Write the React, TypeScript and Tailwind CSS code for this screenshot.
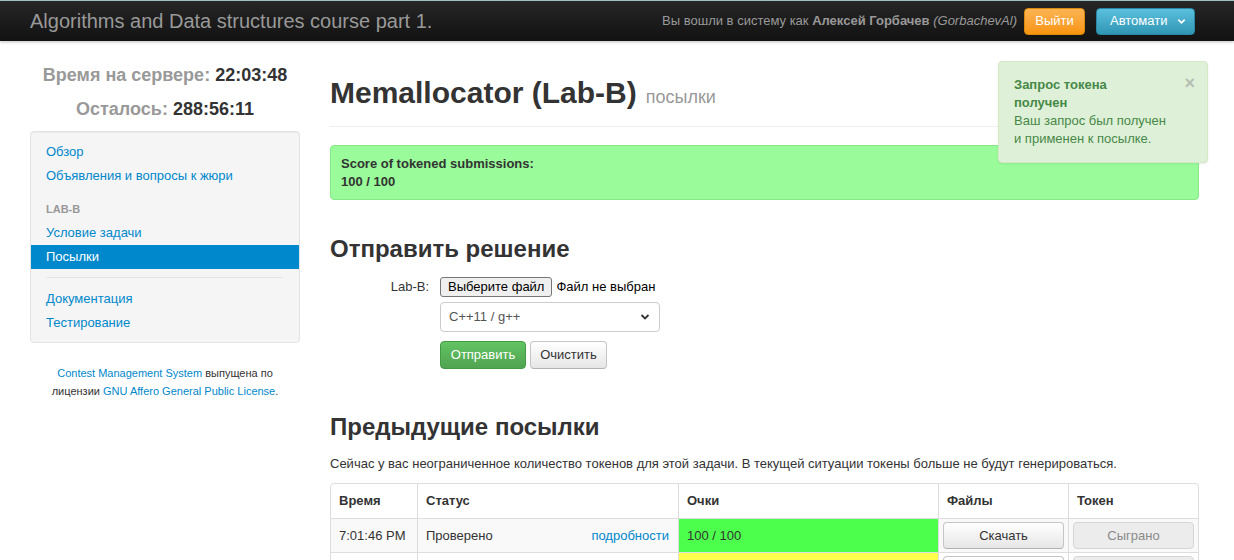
import React from 'react';

const rows = [
  { time: '7:01:46 PM', status: 'Проверено', score: '100 / 100', color: 'bg-[#4cff4c]', token: 'Сыграно', striped: true, files: 'Скачать', details: 'подробности' },
  // second row is cut by the bottom edge of the window; only its top is visible
  { time: '', status: '', score: '', color: 'bg-[#ffff4c]', token: '', striped: false, files: '', details: '' },
];

function Navbar() {
  return (
    <div className="h-[41px] border-t border-[#9fbfc1] bg-gradient-to-b from-[#262626] to-[#121212] flex items-center justify-between pl-[30px] pr-[39px] shadow-[0_1px_3px_rgba(0,0,0,0.25)]">
      <div className="text-[20px] text-[#999] leading-none">Algorithms and Data structures course part 1.</div>
      <div className="flex items-center">
        <span className="text-[13px] text-[#999]">
          Вы вошли в систему как <b>Алексей Горбачев</b> <i>(GorbachevAl)</i>
        </span>
        <button className="ml-[7px] h-[27px] w-[61px] rounded-[4px] border border-[#d88a0c] bg-gradient-to-b from-[#fbb450] to-[#f89406] text-[13px] text-white">
          Выйти
        </button>
        <button className="ml-[11px] h-[27px] w-[99px] rounded-[4px] border border-[#2a87a3] bg-gradient-to-b from-[#5bc0de] to-[#2f96b4] text-[13px] text-white flex items-center pl-[13px] pr-[8px]">
          <span className="flex-1 text-left">Автомати</span>
          <svg width="9" height="9" viewBox="0 0 10 10" className="shrink-0">
            <path d="M1.5 3 L5 6.5 L8.5 3" stroke="white" strokeWidth="2" fill="none" />
          </svg>
        </button>
      </div>
    </div>
  );
}

function Sidebar() {
  const item = 'block h-6 leading-6 px-[15px] text-[13px] text-[#0088cc]';
  return (
    <div className="ml-[30px] w-[270px] shrink-0 pt-[22px]">
      <div className="text-center text-[18px] font-bold leading-6 text-[#999]">
        Время на сервере: <span className="text-[#333]">22:03:48</span>
      </div>
      <div className="mt-[10px] text-center text-[18px] font-bold leading-6 text-[#999]">
        Осталось: <span className="text-[#333]">288:56:11</span>
      </div>
      <div className="mt-[10px] rounded-[4px] border border-[#e3e3e3] bg-[#f5f5f5] pt-[8px] pb-[7px] shadow-[inset_0_1px_1px_rgba(0,0,0,0.05)]">
        <a className={item}>Обзор</a>
        <a className={item}>Объявления и вопросы к жюри</a>
        <div className="mt-[9px] h-6 leading-6 px-[15px] text-[11px] font-bold uppercase text-[#999]">Lab-B</div>
        <a className={item}>Условие задачи</a>
        <a className="block h-6 leading-6 px-[15px] text-[13px] text-white bg-[#0088cc]">Посылки</a>
        <div className="mx-[16px] mt-[8px] mb-[9px] h-px bg-[#e5e5e5]" />
        <a className={item}>Документация</a>
        <a className={item}>Тестирование</a>
      </div>
      <div className="mt-[21px] text-center text-[11px] leading-[18px] text-[#333]">
        <span className="text-[#0088cc]">Contest Management System</span> выпущена по
        <br />
        лицензии <span className="text-[#0088cc]">GNU Affero General Public License</span>.
      </div>
    </div>
  );
}

function Main() {
  const btn = 'rounded-[4px] border border-[#c5c5c5] border-b-[#b3b3b3] bg-gradient-to-b from-white to-[#e6e6e6] text-[13px] text-[#333]';
  return (
    <div className="ml-[30px] w-[869px] shrink-0 pt-[32px] text-[13px] text-[#333]">
      <div className="flex items-baseline border-b border-[#eee] pb-[13px]">
        <h1 className="text-[30px] font-bold leading-[40px] text-[#333]">Memallocator (Lab-B)</h1>
        <span className="ml-[9px] text-[18px] text-[#999]">посылки</span>
      </div>

      <div className="mt-[18px] rounded-[4px] border border-[#87e887] bg-[#99fb99] pl-[10px] pt-[9px] pb-[8px] font-bold leading-[18px] text-[#333]">
        <div>Score of tokened submissions:</div>
        <div>100 / 100</div>
      </div>

      <h2 className="mt-[29px] text-[24px] font-bold leading-[40px]">Отправить решение</h2>

      <div className="mt-[8px] flex">
        <div className="w-[99px] text-right leading-[20px]">Lab-B:</div>
        <div className="ml-[11px]">
          <div className="flex items-center h-[20px]">
            <span className="h-[20px] rounded-[3px] border border-[#767676] bg-[#efefef] px-[7px] leading-[18px] text-[13px] text-black">
              Выберите файл
            </span>
            <span className="ml-[4px] text-black">Файл не выбран</span>
          </div>
          <div className="mt-[5px] flex h-[30px] w-[220px] items-center justify-between rounded-[4px] border border-[#ccc] bg-white pl-[8px] pr-[9px] text-[#555]">
            <span>C++11 / g++</span>
            <svg width="10" height="10" viewBox="0 0 10 10">
              <path d="M1.5 3 L5 6.5 L8.5 3" stroke="#333" strokeWidth="1.8" fill="none" />
            </svg>
          </div>
          <div className="mt-[9px] flex gap-[4px]">
            <button className="h-[28px] w-[86px] rounded-[4px] border border-[#429b42] bg-gradient-to-b from-[#62c462] to-[#51a351] text-[13px] text-white">
              Отправить
            </button>
            <button className={`h-[28px] w-[77px] ${btn}`}>Очистить</button>
          </div>
        </div>
      </div>

      <h2 className="mt-[38px] text-[24px] font-bold leading-[40px]">Предыдущие посылки</h2>
      <p className="mt-[8px] leading-[18px]">
        Сейчас у вас неограниченное количество токенов для этой задачи. В текущей ситуации токены больше не будут генерироваться.
      </p>

      <div className="mt-[10px] rounded-[4px] border border-[#ddd] overflow-hidden">
        <div className="grid grid-cols-[86px_261px_260px_130px_1fr] h-[34px] font-bold">
          <div className="px-[8px] flex items-center">Время</div>
          <div className="px-[8px] flex items-center border-l border-[#ddd]">Статус</div>
          <div className="px-[8px] flex items-center border-l border-[#ddd]">Очки</div>
          <div className="px-[8px] flex items-center border-l border-[#ddd]">Файлы</div>
          <div className="px-[8px] flex items-center border-l border-[#ddd]">Токен</div>
        </div>
        {rows.map((r, i) => (
          <div
            key={i}
            className={`grid grid-cols-[86px_261px_260px_130px_1fr] h-[34px] border-t border-[#ddd] ${r.striped ? 'bg-[#f9f9f9]' : 'bg-white'}`}
          >
            <div className="px-[8px] flex items-center">{r.time}</div>
            <div className="pl-[8px] pr-[9px] flex items-center justify-between border-l border-[#ddd]">
              <span>{r.status}</span>
              <span className="text-[#0088cc]">{r.details}</span>
            </div>
            <div className={`px-[8px] flex items-center border-l border-[#ddd] ${r.color}`}>{r.score}</div>
            <div className="px-[4px] flex items-center border-l border-[#ddd]">
              <button className={`h-[27px] w-full ${btn}`}>{r.files}</button>
            </div>
            <div className="px-[4px] flex items-center border-l border-[#ddd]">
              <button className="h-[27px] w-full rounded-[4px] border border-[#d6d6d6] bg-[#ececec] text-[13px] text-[#8a8a8a]">
                {r.token}
              </button>
            </div>
          </div>
        ))}
      </div>
    </div>
  );
}

export default function App() {
  return (
    <div className="relative min-h-screen bg-white font-['Liberation_Sans',Arial,sans-serif]">
      <Navbar />
      <div className="flex">
        <Sidebar />
        <Main />
      </div>

      <div className="absolute left-[998px] top-[61px] w-[210px] rounded-[4px] border border-[#d6e9c6] bg-[#dff0d8] pl-[15px] pt-[14px] pb-[14px] text-[13px] leading-[18px] text-[#468847] shadow-[0_1px_2px_rgba(0,0,0,0.08)]">
        <span className="absolute right-[12px] top-[11px] text-[18px] font-bold leading-[20px] text-[#b5beb3]">×</span>
        <div className="font-bold">
          Запрос токена
          <br />
          получен
        </div>
        <div>
          Ваш запрос был получен
          <br />
          и применен к посылке.
        </div>
      </div>
    </div>
  );
}
